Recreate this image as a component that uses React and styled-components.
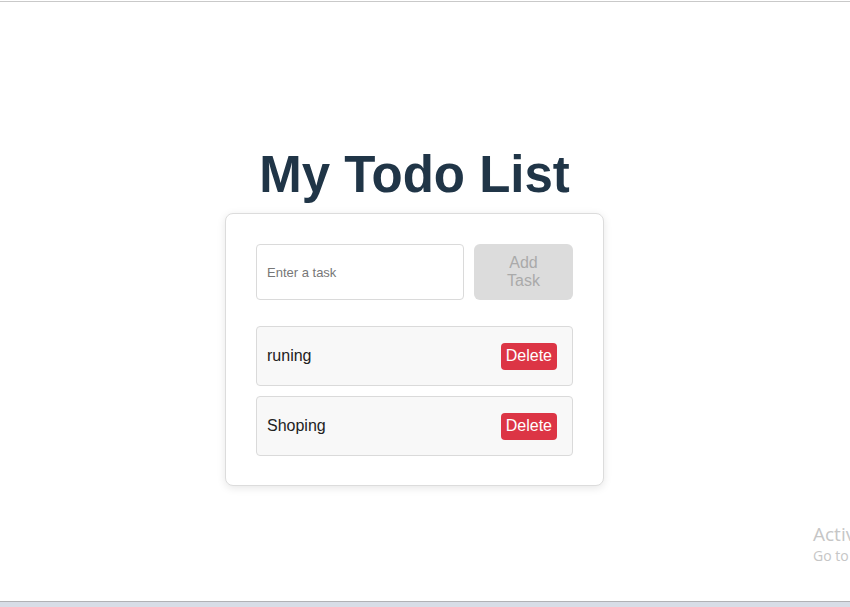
import React, { useState } from "react";
import styled, { createGlobalStyle } from "styled-components";

const Global = createGlobalStyle`
  html, body { margin: 0; padding: 0; background: #fff; overflow: hidden; }
  body { font-family: "Liberation Sans", Arial, sans-serif; }
  * { box-sizing: border-box; }
`;

const Screen = styled.div`
  position: relative;
  height: 100vh;
  display: flex;
  flex-direction: column;
  overflow: hidden;
`;

const TopLine = styled.div`
  height: 2px;
  border-bottom: 1px solid #c9c9c9;
  flex: none;
`;

const Main = styled.main`
  flex: 1;
  display: flex;
  flex-direction: column;
  align-items: center;
  padding: 143px 21px 0 0;
`;

const Title = styled.h1`
  margin: 0 0 9px;
  font-family: "Liberation Sans", Arial, sans-serif;
  font-size: 51px;
  font-weight: 700;
  color: #203547;
  line-height: normal;
`;

const Card = styled.div`
  width: 379px;
  background: #fff;
  border: 1px solid #dcdcdc;
  border-radius: 8px;
  box-shadow: 0 2px 8px rgba(0, 0, 0, 0.1);
  padding: 30px 30px 29px;
`;

const Form = styled.div`
  display: flex;
  gap: 10px;
  margin-bottom: 26px;
`;

const Input = styled.input`
  width: 208px;
  flex: none;
  padding: 10px;
  border: 1px solid #dadada;
  border-radius: 4px;
  font-family: "Liberation Sans", Arial, sans-serif;
  font-size: 13px;
  color: #333;
  outline: none;
  &::placeholder { color: #777; }
`;

const AddButton = styled.button`
  width: 99px;
  flex: none;
  padding: 10px 20px;
  border: none;
  border-radius: 6px;
  background: #dcdcdc;
  color: #aaa;
  font-family: "Liberation Sans", Arial, sans-serif;
  font-size: 16px;
  line-height: 18px;
  cursor: not-allowed;
`;

const List = styled.ul`
  list-style: none;
  margin: 0;
  padding: 0;
  display: flex;
  flex-direction: column;
  gap: 10px;
`;

const Item = styled.li`
  display: flex;
  align-items: center;
  justify-content: space-between;
  height: 60px;
  padding: 0 15px 0 10px;
  background: #f8f8f8;
  border: 1px solid #dadada;
  border-radius: 4px;
  font-size: 16px;
  color: #222;
`;

const DeleteButton = styled.button`
  height: 27px;
  padding: 0 5px;
  border: none;
  border-radius: 4px;
  background: #dc3545;
  color: #fff;
  font-family: "Liberation Sans", Arial, sans-serif;
  font-size: 16px;
  cursor: pointer;
`;

const Taskbar = styled.div`
  height: 6px;
  flex: none;
  border-top: 1px solid #b1b1b5;
  background: #d8dde7;
`;

const Watermark = styled.div`
  position: absolute;
  left: 813px;
  top: 522px;
  white-space: nowrap;
  color: #c6c6c6;
  font-family: "Open Sans", "Noto Sans", sans-serif;
  pointer-events: none;
`;

const WmTitle = styled.div`
  font-size: 19px;
  line-height: 24px;
`;

const WmSub = styled.div`
  font-size: 14px;
  line-height: 20px;
`;

export default function App() {
  const [tasks, setTasks] = useState(["runing", "Shoping"]);
  const [text, setText] = useState("");
  const add = () => {
    if (!text.trim()) return;
    setTasks([...tasks, text.trim()]);
    setText("");
  };
  return (
    <Screen>
      <Global />
      <TopLine />
      <Main>
        <Title>My Todo List</Title>
        <Card>
          <Form>
            <Input
              placeholder="Enter a task"
              value={text}
              onChange={(e) => setText(e.target.value)}
            />
            <AddButton onClick={add} disabled={!text.trim()}>
              Add Task
            </AddButton>
          </Form>
          <List>
            {tasks.map((t, i) => (
              <Item key={i}>
                <span>{t}</span>
                <DeleteButton
                  onClick={() => setTasks(tasks.filter((_, j) => j !== i))}
                >
                  Delete
                </DeleteButton>
              </Item>
            ))}
          </List>
        </Card>
      </Main>
      <Taskbar />
      <Watermark>
        <WmTitle>Activate Windows</WmTitle>
        <WmSub>Go to Settings to activate Windows.</WmSub>
      </Watermark>
    </Screen>
  );
}
